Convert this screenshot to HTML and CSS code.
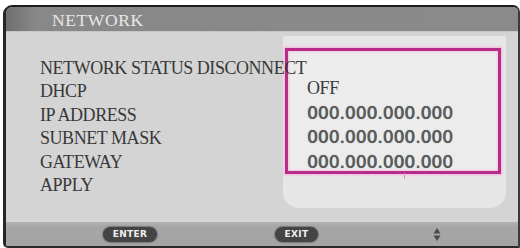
FILE: index.html
```html
<!DOCTYPE html>
<html>
<head>
<meta charset="utf-8">
<link rel="stylesheet" href="styles.css">
</head>
<body>
<div class="window">
  <div class="titlebar">NETWORK</div>
  <div class="content">
    <div class="labels">
      <div class="row">NETWORK STATUS DISCONNECT</div>
      <div class="row">DHCP</div>
      <div class="row">IP ADDRESS</div>
      <div class="row">SUBNET MASK</div>
      <div class="row">GATEWAY</div>
      <div class="row">APPLY</div>
    </div>
    <div class="panel">
      <div class="box">
        <div class="val serif">OFF</div>
        <div class="val num">000.000.000.000</div>
        <div class="val num">000.000.000.000</div>
        <div class="val num">000.000.000.000</div>
        <span class="tick"></span>
      </div>
    </div>
  </div>
  <div class="footer">
    <span class="pill enter">ENTER</span>
    <span class="pill exit">EXIT</span>
    <svg class="updown" width="8" height="13" viewBox="0 0 8 13"><path d="M4 0 L7.5 5.5 L0.5 5.5 Z M4 13 L7.5 7.5 L0.5 7.5 Z" fill="#4a4a4a"/></svg>
  </div>
</div>
</body>
</html>
```
FILE: styles.css
```css
html, body {
  margin: 0;
  padding: 0;
  background: #ffffff;
}
body {
  width: 520px;
  height: 248px;
  overflow: hidden;
}
.window {
  box-sizing: border-box;
  margin: 5px 0 0 3px;
  width: 517px;
  height: 243px;
  border-top: 2px solid #1c1c1c;
  border-left: 3px solid #262626;
  border-right: 2px solid #3a3a3a;
  border-bottom: 2px solid #2a2a2a;
  border-radius: 9px 7px 0 5px;
  overflow: hidden;
  display: flex;
  flex-direction: column;
  background: #d4d4d4;
}
.titlebar {
  height: 25px;
  line-height: 27px;
  padding-left: 46px;
  background: linear-gradient(90deg, #6e6e6e 0px, #888888 30px, #8a8a8a 100%);
  border-bottom: 1px solid #c6c6c6;
  box-sizing: border-box;
  font-family: "Liberation Serif", serif;
  font-size: 17.5px;
  letter-spacing: 0.6px;
  color: #e4e4e4;
  text-shadow: 0 0 1px #9a9a9a;
}
.content {
  height: 190px;
  display: flex;
  background: #d4d4d4;
}
.labels {
  position: relative;
  z-index: 1;
  box-sizing: border-box;
  width: 277px;
  padding: 25px 0 0 34px;
  font-family: "Liberation Serif", serif;
  font-size: 18px;
  letter-spacing: -0.45px;
  color: #383838;
  white-space: nowrap;
}
.row {
  height: 23.4px;
  line-height: 23.4px;
}
.panel {
  margin-top: 4px;
  width: 223px;
  height: 172px;
  box-sizing: border-box;
  padding: 12px 0 0 2px;
  background: #e6e6e6;
  border-radius: 0 0 16px 16px;
}
.box {
  position: relative;
  box-sizing: border-box;
  width: 216px;
  height: 126px;
  padding: 25px 0 0 19px;
  border: 3px solid #b62c86;
  background: #ececec;
  box-shadow: 0 0 2px 1px #f3b2dc, inset 0 0 2px 1px #f2c4e2;
}
.val {
  height: 24.5px;
  line-height: 24.5px;
  white-space: nowrap;
}
.serif {
  font-family: "Liberation Serif", serif;
  font-size: 18px;
  letter-spacing: -0.4px;
  color: #3a3a3a;
}
.num {
  font-family: "DejaVu Sans", sans-serif;
  font-size: 17px;
  color: #5c5c5c;
  text-shadow: 0.4px 0 0 #5c5c5c, 0 0 1px #777777;
}
.tick {
  position: absolute;
  left: 116px;
  bottom: -8px;
  width: 1px;
  height: 6px;
  background: #e48ac4;
}
.footer {
  height: 24px;
  display: flex;
  align-items: center;
  padding-left: 97px;
  background: linear-gradient(180deg, #b2b2b2 0px, #a6a6a6 5px, #a4a4a4 100%);
}
.pill {
  display: flex;
  align-items: center;
  justify-content: center;
  height: 15px;
  border-radius: 8px;
  background: #444444;
  box-shadow: 0 0 1px 1px #7a7a7a;
  font-family: "DejaVu Sans", sans-serif;
  font-weight: bold;
  font-size: 9px;
  letter-spacing: 0.3px;
  color: #f0f0f0;
}
.enter {
  width: 54px;
}
.exit {
  width: 43px;
  margin-left: 118px;
}
.updown {
  margin-left: 115px;
}
```
